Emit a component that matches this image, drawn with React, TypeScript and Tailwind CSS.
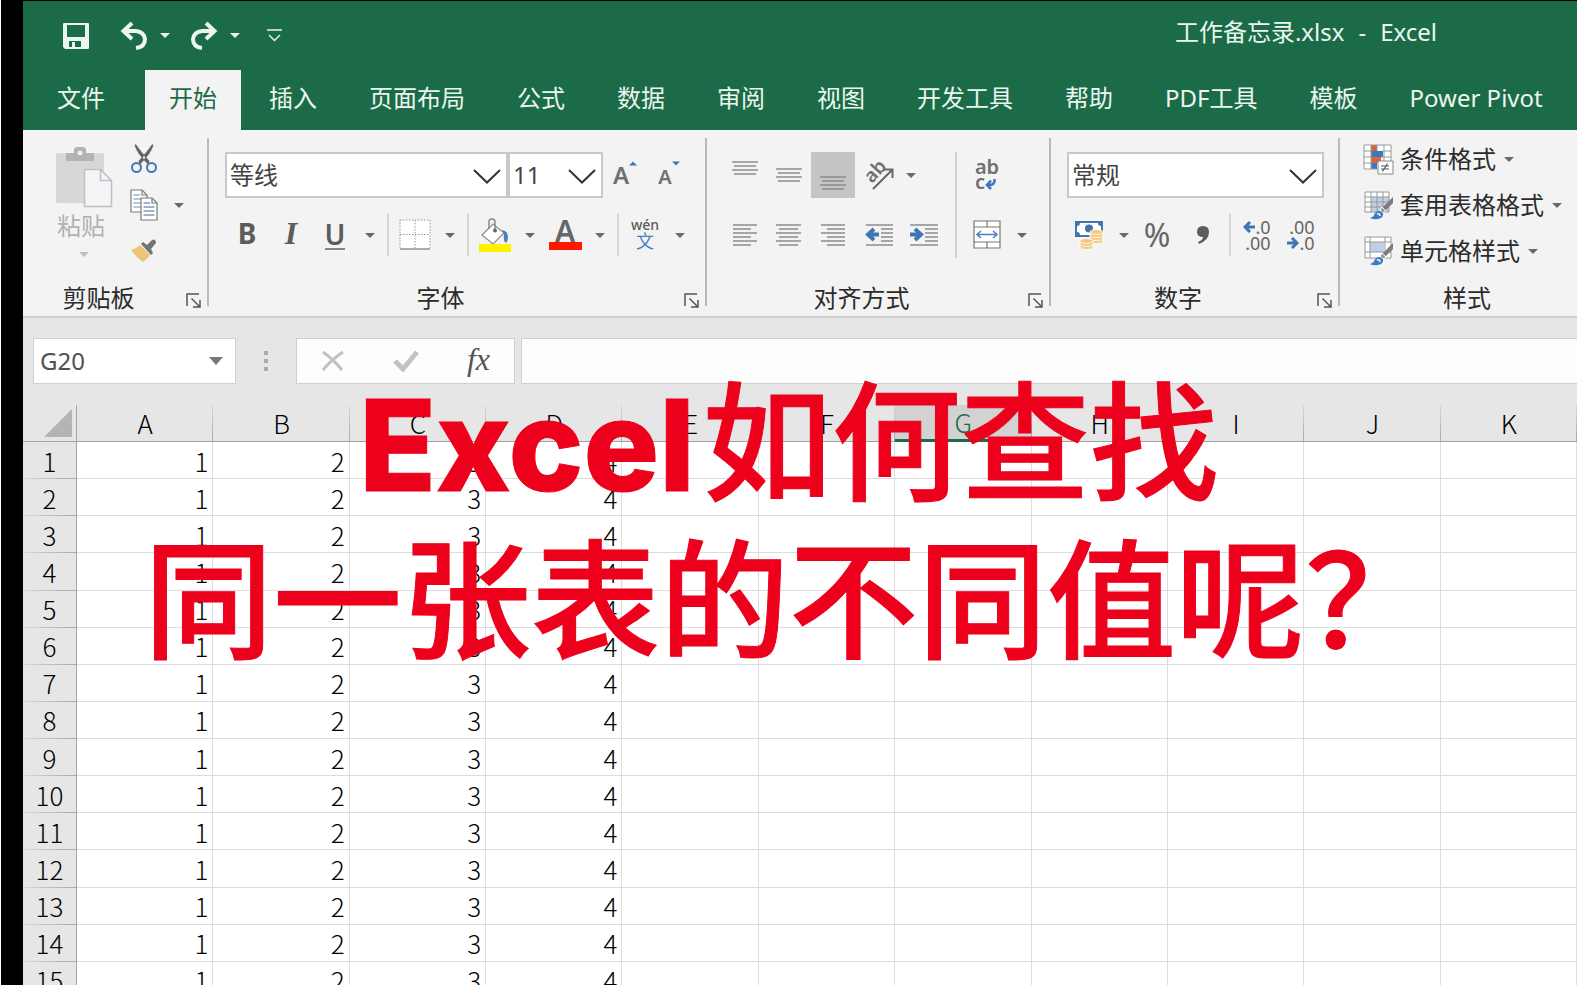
import type { ReactNode } from 'react'
import clsx from 'clsx'

const tabs = ['开始', '插入', '页面布局', '公式', '数据', '审阅', '视图', '开发工具', '帮助', 'PDF工具', '模板', 'Power Pivot']
const columns = ['A', 'B', 'C', 'D', 'E', 'F', 'G', 'H', 'I', 'J', 'K']
const rows = Array.from({ length: 15 }, (_, i) => i + 1)

function Caret({ className = 'text-[#6a6a6a]' }: { className?: string }) {
  return (
    <svg width="10" height="5" viewBox="0 0 10 5" fill="currentColor" className={className} aria-hidden="true">
      <path d="M0 0h10L5 5z" />
    </svg>
  )
}

function CaretButton({ label }: { label: string }) {
  return (
    <button type="button" aria-label={label} className="flex w-[26px] h-[46px] shrink-0 items-center justify-center">
      <Caret />
    </button>
  )
}

function ToolButton({ label, active, wide, children }: { label: string; active?: boolean; wide?: boolean; children: ReactNode }) {
  return (
    <button
      type="button"
      aria-label={label}
      aria-pressed={active}
      className={clsx('flex h-[46px] shrink-0 items-center justify-center', wide ? 'w-[46px]' : 'w-11', active && 'bg-[#c5c5c5]')}
    >
      {children}
    </button>
  )
}

function Divider() {
  return <div className="mx-1 h-[42px] w-0.5 shrink-0 self-center bg-[#d6d6d6]" />
}

function Chevron() {
  return (
    <svg width="28" height="15" viewBox="0 0 28 15" fill="none" stroke="#333" strokeWidth="2" className="pointer-events-none absolute right-[7px] top-[17px]" aria-hidden="true">
      <path d="M1 1l13 12.500L27 1" />
    </svg>
  )
}

function Combo({ label, value, className }: { label: string; value: string; className: string }) {
  return (
    <div className={clsx('relative shrink-0', className)}>
      <select aria-label={label} className="h-[46px] w-full appearance-none border-2 border-[#c8c8c8] bg-white pl-[3px] text-2xl text-[#444]">
        <option>{value}</option>
      </select>
      <Chevron />
    </div>
  )
}

function Group({ title, launcher = true, className, children }: { title: string; launcher?: boolean; className?: string; children: ReactNode }) {
  return (
    <section aria-label={title} className={clsx('flex flex-col justify-between', className)}>
      {children}
      <div className="flex h-8 items-center pr-1.5">
        <h2 className="flex-1 text-center text-2xl leading-8">{title}</h2>
        {launcher && (
          <button type="button" aria-label={`${title}设置`} className="ml-3 mt-1">
            <svg width="15" height="15" viewBox="0 0 15 15" fill="none" stroke="#555" strokeWidth="1.500">
              <path d="M1 13V1h12M5.500 5.500l8 8M14 7v7H7" />
            </svg>
          </button>
        )}
      </div>
    </section>
  )
}

function GroupLine() {
  return <div className="my-2 w-0.5 shrink-0 bg-[#bababa]" />
}

/* horizontal rules as [x1, x2] pairs, top to bottom */
function Lines({ spans, top = 2, step = 4, children }: { spans: number[][]; top?: number; step?: number; children?: ReactNode }) {
  return (
    <svg width="30" height="30" viewBox="0 0 30 30" stroke="#858585" strokeWidth="1.400" fill="none">
      {spans.map(([a, b], i) => (
        <path key={i} d={`M${a} ${top + i * step}H${b}`} />
      ))}
      {children}
    </svg>
  )
}

const block = [[2, 28], [4, 26], [2, 28], [4, 26]]

function PasteIcon() {
  return (
    <svg width="58" height="62" viewBox="0 0 58 62">
      <rect x="1" y="7" width="48" height="50" rx="2" fill="#d7d6d8" />
      <path d="M11 15V8q0-1 2-1h6V4q0-3 3-3h6q3 0 3 3v3h6q2 0 2 1v7z" fill="#b3b2b4" />
      <circle cx="25" cy="7" r="2.500" fill="#eee" />
      <path d="M29.500 23.500h16l11 11v26h-27z" fill="#f6f3f7" stroke="#c0bfc1" strokeWidth="1.500" />
      <path d="M45.500 23.500v11h11" fill="none" stroke="#c0bfc1" strokeWidth="1.500" />
    </svg>
  )
}

function ScissorsIcon() {
  return (
    <svg width="28" height="30" viewBox="0 0 28 30" fill="none">
      <path d="M5 1q2 8 13 19l1-3Q10 7 6 1zM23 1q-2 8-13 19l-1-3Q18 7 22 1z" fill="#666" stroke="#666" />
      <circle cx="6.500" cy="23.500" r="4.500" stroke="#4575b8" strokeWidth="2" />
      <circle cx="21.500" cy="23.500" r="4.500" stroke="#4575b8" strokeWidth="2" />
    </svg>
  )
}

function CopyIcon() {
  return (
    <svg width="28" height="32" viewBox="0 0 28 32" stroke="#7a7a7a" strokeWidth="1.200" fill="#fff">
      <path d="M1 1h11l5 5v17H1z" />
      <path d="M12 1v5h5" fill="none" />
      <path d="M3.500 6H10M3.500 10h10M3.500 14h10M3.500 18h10" stroke="#6f8fae" />
      <path d="M11 9h11l5 5v17H11z" />
      <path d="M22 9v5h5" fill="none" />
      <path d="M13.500 14H20M13.500 18h11M13.500 22h11M13.500 26h11" stroke="#44698f" />
    </svg>
  )
}

function PainterIcon() {
  return (
    <svg width="26" height="24" viewBox="0 0 26 24">
      <path d="M9 6l10 10q-3 5-7 7Q5 18 0 11q5-1 9-5z" fill="#edc376" />
      <path d="M10 5l2-2 4 3 5-5q2-1 3 0t1 3l-5 6 2 4-2 2z" fill="#737373" />
    </svg>
  )
}

function BorderIcon() {
  return (
    <svg width="32" height="32" viewBox="0 0 32 32" fill="#fff">
      <rect x="1" y="1" width="30" height="29" stroke="#999" strokeDasharray="1.500 1.500" />
      <path d="M16 1v29M1 15.500h30" stroke="#999" strokeDasharray="1.500 1.500" />
      <path d="M1 30h30" stroke="#999" strokeWidth="1.500" />
    </svg>
  )
}

function FillIcon() {
  return (
    <svg width="34" height="34" viewBox="0 0 34 34" fill="none">
      <path d="M4 17L15 6l11 9-11 11z" fill="#fff" stroke="#8a8a8a" strokeWidth="1.200" />
      <path d="M11 11V4q0-3 3-3t3 3v8" stroke="#8a8a8a" strokeWidth="1.500" />
      <circle cx="17" cy="12.500" r="2" fill="#666" />
      <path d="M24 12q6 1 6 7 0 4-2 6-3-2-2-9z" fill="#4a80b5" />
      <path d="M1 26h32v8H1z" fill="#fff200" />
    </svg>
  )
}

function FontColorIcon() {
  return (
    <span className="flex w-[33px] flex-col items-center">
      <span className="h-[22px] text-[30px] leading-[22px] font-semibold text-[#666]">A</span>
      <span className="h-2 w-full bg-[#ff1800]" />
    </span>
  )
}

function OrientationIcon() {
  return (
    <svg width="32" height="32" viewBox="0 0 32 32" fill="none" className="overflow-visible">
      <text x="0" y="0" transform="translate(10 25) rotate(-48)" fontSize="19" fontWeight="600" fill="#707070">ab</text>
      <path d="M11 30L30 11M22 10.500h8.500V19" stroke="#666" strokeWidth="2" />
    </svg>
  )
}

function WrapIcon() {
  return (
    <span className="flex flex-col text-xl leading-[14px] font-semibold text-[#707070]">
      <span>ab</span>
      <span className="flex items-center">
        c
        <svg width="11" height="12" viewBox="0 0 11 12" className="mt-1" fill="none" stroke="#3d76bd" strokeWidth="2.500">
          <path d="M9.500 1v2q0 4-6 4M6 2.500L2 7l4 4" />
        </svg>
      </span>
    </span>
  )
}

function MergeIcon() {
  return (
    <svg width="28" height="30" viewBox="0 0 28 30" fill="#fff" stroke="#777" strokeWidth="1.200">
      <path d="M1 1h26v27H1zM1 7h26M1 22h26M14 1v6M14 22v6" />
      <path d="M4 14.500h20M8 11l-4 3.500L8 18M20 11l4 3.500-4 3.500" fill="none" stroke="#4a80bd" strokeWidth="1.500" />
    </svg>
  )
}

function MoneyIcon() {
  return (
    <svg width="30" height="30" viewBox="0 0 30 30">
      <path d="M1 1h28v16H1z" fill="#3f76ad" />
      <path d="M6 3h18q0 3 3 3v6q-3 0-3 3H6q0-3-3-3V6q3 0 3-3z" fill="#fff" />
      <circle cx="15" cy="8.500" r="4" fill="#3f76ad" />
      <g fill="#f4c987" stroke="#fff" strokeWidth="0.800">
        <path d="M16 12v9q0 2.500 6.500 2.500T29 21v-9z" />
        <ellipse cx="22.500" cy="12" rx="6.500" ry="2.500" />
        <path d="M16 15q0 2.500 6.500 2.500T29 15M16 18q0 2.500 6.500 2.500T29 18" fill="none" />
        <path d="M6 21v6q0 2.500 6.500 2.500T19 27v-6z" />
        <ellipse cx="12.500" cy="21" rx="6.500" ry="2.500" />
        <path d="M6 24q0 2.500 6.500 2.500T19 24" fill="none" />
      </g>
    </svg>
  )
}

function BlueArrow({ flip }: { flip?: boolean }) {
  return (
    <svg width="12" height="12" viewBox="0 0 12 12" fill="none" stroke="#3f76b3" strokeWidth="3" className={flip ? 'rotate-180' : undefined}>
      <path d="M12 6H2M7 1L2 6l5 5" />
    </svg>
  )
}

function Brush() {
  return (
    <>
      <path d="M30 7v6l-8 8-3-3z" fill="#7d7d7d" />
      <path d="M19 17l4 4-3 2-3-3z" fill="#999" stroke="#fff" />
      <path d="M7 28q4-1 5-5 4-4 8 0 1 5-5 6-4 1-8-1z" fill="#3d7cc4" />
      <path d="M14 24q3-1 3 2" stroke="#fff" strokeWidth="1.500" fill="none" />
    </>
  )
}

function ConditionalIcon() {
  return (
    <svg width="31" height="31" viewBox="0 0 31 31">
      <path d="M1 1h27v24H1z" fill="#fff" />
      <path d="M8 1h6v6H8zM8 13h10v6H8z" fill="#d9633b" />
      <path d="M8 7h12v6H8zM8 19h6v6H8z" fill="#3c79bb" />
      <path d="M1 1h27v24H1zM8 1v24M21 1v24M14 1v6M1 7h7M20 7h8M1 13h7M18 13h10M1 19h7" fill="none" stroke="#999" />
      <path d="M15 17h15v13H15z" fill="#fff" stroke="#888" />
      <path d="M18 22h8M18 25h8M24.500 19.500l-5 8" stroke="#555" strokeWidth="1.200" />
    </svg>
  )
}

function TableFormatIcon() {
  return (
    <svg width="31" height="31" viewBox="0 0 31 31">
      <path d="M2 2h24v20H2z" fill="#fff" />
      <path d="M8 7h18v15H8z" fill="#bfcfe6" />
      <path d="M2 2h24v20H2zM8 2v20M14 2v20M20 2v20M2 7h24M2 12h24M2 17h24" fill="none" stroke="#999" />
      <Brush />
    </svg>
  )
}

function CellStyleIcon() {
  return (
    <svg width="31" height="31" viewBox="0 0 31 31">
      <path d="M2 1h26v21H2z" fill="#fff" />
      <path d="M7 6h14v10H7z" fill="#bfcfe6" />
      <path d="M2 1h26v21H2zM7 1v21M22 1v21M2 6h26M2 16h26" fill="none" stroke="#999" />
      <Brush />
    </svg>
  )
}

function TitleBar() {
  return (
    <div className="flex h-[69px] items-center pl-[31px] text-[#eaf6ee]">
      <button type="button" aria-label="保存" className="flex w-11 justify-center">
        <svg width="26" height="26" viewBox="0 0 26 26" fill="currentColor" fillRule="evenodd">
          <path d="M1 0h24q1 0 1 1v24q0 1-1 1H2l-2-2V1q0-1 1-1zM4 2v12h18V2zM6 18v6h3v-5h3v5h6v-6z" />
        </svg>
      </button>
      <button type="button" aria-label="撤消" className="ml-3.5 flex w-11 justify-center">
        <svg width="28" height="28" viewBox="0 0 28 28" fill="none" stroke="currentColor" strokeWidth="4">
          <path d="M3 9h13q8 1 9 8 0 8-9 9" />
          <path d="M12 1L3.500 9l8.500 8" />
        </svg>
      </button>
      <button type="button" aria-label="撤消列表" className="flex w-[18px] justify-center">
        <Caret className="text-[#eaf6ee]" />
      </button>
      <button type="button" aria-label="恢复" className="ml-2 flex w-11 justify-center">
        <svg width="28" height="28" viewBox="0 0 28 28" fill="none" stroke="currentColor" strokeWidth="4">
          <path d="M25 9H12q-8 1-9 8 0 8 9 9" />
          <path d="M16 1l8.500 8-8.500 8" />
        </svg>
      </button>
      <button type="button" aria-label="恢复列表" className="flex w-[18px] justify-center">
        <Caret className="text-[#eaf6ee]" />
      </button>
      <button type="button" aria-label="自定义快速访问工具栏" className="ml-2 flex w-11 justify-center">
        <svg width="15" height="13" viewBox="0 0 15 13" fill="none" stroke="currentColor" strokeWidth="1.400">
          <path d="M0 1h15M2 6l5.500 5.500L13 6" />
        </svg>
      </button>
      <h1 className="ml-auto mb-2 flex gap-3.5 pr-[140px] text-2xl">
        <span>工作备忘录.xlsx</span>
        <span>-</span>
        <span>Excel</span>
      </h1>
    </div>
  )
}

function TabBar() {
  return (
    <nav className="flex h-[60px] gap-1 text-2xl leading-[56px] whitespace-nowrap text-[#eaf6ee]">
      <a href="#file" className="pl-[34px] pr-9">文件</a>
      {tabs.map((tab, i) => (
        <a key={tab} href={`#${tab}`} className={clsx('px-6', i === 0 && 'bg-[#f3f3f3] text-[#1e6b47]')}>
          {tab}
        </a>
      ))}
    </nav>
  )
}

function Ribbon() {
  return (
    <div className="flex h-[188px] border-b-2 border-[#d0d0d0] bg-[#f3f3f3] pb-0.5 text-[#2b2b2b]">
      <Group title="剪贴板" className="pt-1.5">
        <div className="flex pl-[30px] pr-[15px]">
          <button type="button" className="flex w-[62px] flex-col items-center pt-2.5 text-2xl text-[#b2b2b2]">
            <PasteIcon />
            <span className="mr-1.5 leading-9">粘贴</span>
            <Caret className="mt-2 text-[#c0c0c0]" />
          </button>
          <div className="ml-[7px] flex flex-col">
            <ToolButton label="剪切"><ScissorsIcon /></ToolButton>
            <div className="flex">
              <ToolButton label="复制"><CopyIcon /></ToolButton>
              <CaretButton label="复制选项" />
            </div>
            <ToolButton label="格式刷"><PainterIcon /></ToolButton>
          </div>
        </div>
      </Group>
      <GroupLine />

      <Group title="字体" className="pt-[22px]">
        <div className="flex flex-col gap-3.5 pl-4 pr-3">
          <div className="flex">
            <Combo label="字体名称" value="等线" className="w-[283px]" />
            <Combo label="字号" value="11" className="w-[95px]" />
            <ToolButton label="增大字号">
              <span className="text-2xl font-semibold text-[#707070]">A</span>
              <Caret className="mb-6 w-2 rotate-180 text-[#3f76ad]" />
            </ToolButton>
            <ToolButton label="减小字号">
              <span className="mt-1 text-xl font-semibold text-[#707070]">A</span>
              <Caret className="mb-6 w-2 text-[#3f76ad]" />
            </ToolButton>
          </div>
          <div className="flex text-[#5c5c5c]">
            <ToolButton label="加粗"><span className="pb-1 text-[28px] font-bold">B</span></ToolButton>
            <ToolButton label="倾斜"><span className="pb-1 font-['Liberation_Serif',serif] text-[32px] font-bold italic">I</span></ToolButton>
            <ToolButton label="下划线"><span className="border-b-2 border-[#858585] text-[28px] leading-7 font-semibold">U</span></ToolButton>
            <CaretButton label="下划线选项" />
            <Divider />
            <ToolButton label="边框"><BorderIcon /></ToolButton>
            <CaretButton label="边框选项" />
            <Divider />
            <ToolButton label="填充颜色"><FillIcon /></ToolButton>
            <CaretButton label="填充颜色选项" />
            <ToolButton label="字体颜色"><FontColorIcon /></ToolButton>
            <CaretButton label="字体颜色选项" />
            <Divider />
            <ToolButton label="拼音指南">
              <span className="flex flex-col items-center leading-4">
                <span className="text-sm leading-3 font-medium">wén</span>
                <span className="text-lg leading-5 text-[#4a80bd]">文</span>
              </span>
            </ToolButton>
            <CaretButton label="拼音选项" />
          </div>
        </div>
      </Group>
      <GroupLine />

      <Group title="对齐方式" className="pt-[22px]">
        <div className="flex pl-4 pr-3.5">
          <div className="flex w-[224px] flex-col gap-3.5">
            <div className="flex">
              <ToolButton label="顶端对齐"><Lines spans={block} /></ToolButton>
              <ToolButton label="垂直居中"><Lines spans={block} top={9} /></ToolButton>
              <ToolButton label="底端对齐" active><Lines spans={block} top={17} /></ToolButton>
              <ToolButton label="方向" wide><OrientationIcon /></ToolButton>
              <button type="button" aria-label="方向选项" className="flex w-5 items-center justify-center">
                <Caret />
              </button>
            </div>
            <div className="flex">
              <ToolButton label="左对齐"><Lines spans={[[3, 27], [3, 21], [3, 27], [3, 21], [3, 27], [3, 21]]} top={5} /></ToolButton>
              <ToolButton label="居中"><Lines spans={[[2, 27], [5, 24], [2, 27], [5, 24], [2, 27], [5, 24]]} top={5} /></ToolButton>
              <ToolButton label="右对齐"><Lines spans={[[3, 27], [9, 27], [3, 27], [9, 27], [3, 27], [9, 27]]} top={5} /></ToolButton>
              <ToolButton label="减少缩进量" wide>
                <Lines spans={[[3, 30], [18, 30], [18, 30], [18, 30], [18, 30], [3, 30]]} top={5}>
                  <path d="M16 14.500H6M11 9l-6 5.500L11 20" stroke="#3f76b3" strokeWidth="4" />
                </Lines>
              </ToolButton>
              <ToolButton label="增加缩进量" wide>
                <Lines spans={[[1, 29], [16, 29], [16, 29], [16, 29], [16, 29], [1, 29]]} top={5}>
                  <path d="M1 14.500h10M6 9l6 5.500L6 20" stroke="#3f76b3" strokeWidth="4" />
                </Lines>
              </ToolButton>
            </div>
          </div>
          <div className="mx-2 w-0.5 bg-[#d0d0d0]" />
          <div className="flex flex-col gap-3.5">
            <ToolButton label="自动换行"><WrapIcon /></ToolButton>
            <div className="flex">
              <ToolButton label="合并后居中"><MergeIcon /></ToolButton>
              <CaretButton label="合并选项" />
            </div>
          </div>
        </div>
      </Group>
      <GroupLine />

      <Group title="数字" className="pt-[22px]">
        <div className="flex flex-col gap-3.5 pl-4 pr-3.5">
          <Combo label="数字格式" value="常规" className="w-[257px]" />
          <div className="flex text-[#666]">
            <ToolButton label="会计数字格式"><MoneyIcon /></ToolButton>
            <CaretButton label="会计数字格式选项" />
            <ToolButton label="百分比样式"><span className="pr-1 text-[32px]">%</span></ToolButton>
            <ToolButton label="千位分隔样式">
              <svg width="12" height="18" viewBox="0 0 12 18" fill="#5c5c5c">
                <path d="M6 0q6 0 6 6 0 8-10 12l-1-2q5-2 5-5-6 0-6-5 0-6 6-6z" />
              </svg>
            </ToolButton>
            <Divider />
            <ToolButton label="增加小数位数">
              <span className="flex flex-col items-end text-lg leading-4">
                <span className="flex items-center"><BlueArrow />.0</span>
                <span>.00</span>
              </span>
            </ToolButton>
            <ToolButton label="减少小数位数">
              <span className="flex flex-col items-end text-lg leading-4">
                <span>.00</span>
                <span className="flex items-center"><BlueArrow flip />.0</span>
              </span>
            </ToolButton>
          </div>
        </div>
      </Group>
      <GroupLine />

      <Group title="样式" launcher={false} className="flex-1 pt-1.5 pl-[23px] whitespace-nowrap">
        <div className="flex flex-col items-start text-2xl">
          <button type="button" className="flex h-[46px] items-center">
            <ConditionalIcon /><span className="ml-1.5 mr-2">条件格式</span><Caret />
          </button>
          <button type="button" className="flex h-[46px] items-center">
            <TableFormatIcon /><span className="ml-1.5 mr-2">套用表格格式</span><Caret />
          </button>
          <button type="button" className="flex h-[46px] items-center">
            <CellStyleIcon /><span className="ml-1.5 mr-2">单元格样式</span><Caret />
          </button>
        </div>
      </Group>
    </div>
  )
}

function FormulaBar() {
  return (
    <div className="flex pt-5 pb-[21px] pl-2.5">
      <div className="flex h-[46px] w-[203px] items-center border border-[#d0d0d0] bg-white pr-3">
        <input aria-label="名称框" defaultValue="G20" className="w-full min-w-0 flex-1 pl-1.5 text-2xl text-[#505050] outline-none" />
        <button type="button" aria-label="名称列表">
          <svg width="14" height="8" viewBox="0 0 14 8" fill="#777"><path d="M0 0h14L7 8z" /></svg>
        </button>
      </div>
      <svg width="4" height="46" viewBox="0 0 4 46" fill="#aaa" className="mx-7">
        <path d="M0 13h4v4H0zM0 21h4v4H0zM0 29h4v4H0z" />
      </svg>
      <div className="flex h-[46px] w-[219px] shrink-0 items-center justify-around border border-[#d0d0d0] bg-[#fdfdfd]">
        <button type="button" aria-label="取消">
          <svg width="24" height="22" viewBox="0 0 24 22" fill="none" stroke="#c2c2c2" strokeWidth="3">
            <path d="M2 2q10 7 19 18M22 2Q10 10 2 20" />
          </svg>
        </button>
        <button type="button" aria-label="输入">
          <svg width="26" height="22" viewBox="0 0 26 22" fill="none" stroke="#c2c2c2" strokeWidth="5">
            <path d="M2 11l8 8L24 2" />
          </svg>
        </button>
        <button type="button" aria-label="插入函数" className="pb-1 font-['Liberation_Serif',serif] text-[32px] leading-8 italic text-[#555]">fx</button>
      </div>
      <input aria-label="编辑栏" className="ml-1.5 h-[46px] min-w-0 flex-1 border border-r-0 border-[#d0d0d0] bg-[#fdfdfd] px-2 text-2xl outline-none" />
    </div>
  )
}

function Sheet() {
  return (
    <table className="h-[594px] w-full table-fixed border-separate border-spacing-0 bg-white font-['Noto_Sans_CJK_SC',sans-serif] text-[26px] leading-8 text-black">
      <thead>
        <tr className="h-[37px] bg-[#e6e6e6]">
          <th className="w-[54px] border-r border-b border-[#a6a6a6] p-0 pr-1">
            <svg width="28" height="28" viewBox="0 0 28 28" fill="#b4b4b4" className="ml-auto" aria-label="全选">
              <path d="M28 0v28H0z" />
            </svg>
          </th>
          {columns.map((col) => (
            <th
              key={col}
              scope="col"
              className={clsx(
                'bg-[linear-gradient(to_bottom,#d8d8d8,#a8a8a8)] bg-[length:1px_100%] bg-right bg-no-repeat p-0 font-light',
                col === 'G' ? 'border-b-3 border-[#1e6b47] bg-[#d2d2d2] text-[#1e6b47]' : 'border-b border-[#a0a0a0]',
              )}
            >
              {col}
            </th>
          ))}
        </tr>
      </thead>
      <tbody>
        {rows.map((row) => (
          <tr key={row} className="h-[37px] font-light">
            <th scope="row" className="border-r border-[#a6a6a6] bg-[#e6e6e6] bg-[linear-gradient(to_right,#d8d8d8,#a8a8a8)] bg-[length:100%_1px] bg-bottom bg-no-repeat p-0 font-light">
              {row}
            </th>
            {columns.map((col, i) => (
              <td key={col} className="border-r border-b border-[#dcdcdc] p-0 pt-px pr-1 text-right">
                {i < 4 ? i + 1 : ''}
              </td>
            ))}
          </tr>
        ))}
      </tbody>
    </table>
  )
}

export default function App() {
  return (
    <div lang="zh-CN" className="relative h-screen overflow-hidden border-l border-white bg-black pt-px pl-[22px] font-['Noto_Sans','Noto_Sans_CJK_SC',sans-serif]">
      <header className="bg-[#1c6b48]">
        <TitleBar />
        <TabBar />
      </header>
      <main className="bg-[#e6e6e6]">
        <Ribbon />
        <FormulaBar />
        <Sheet />
      </main>
      <p className="pointer-events-none absolute inset-x-0 top-[356px] text-center font-['Noto_Sans_CJK_SC',sans-serif] text-[129px] leading-[158px] font-medium whitespace-nowrap text-[#ec001b] [-webkit-text-stroke:1px_#ec001b]">
        <span className="mr-2 font-['Inter',sans-serif] text-[126px] leading-none font-extrabold">Excel</span>如何查找
        <br />
        同一张表的不同值呢？
      </p>
    </div>
  )
}
